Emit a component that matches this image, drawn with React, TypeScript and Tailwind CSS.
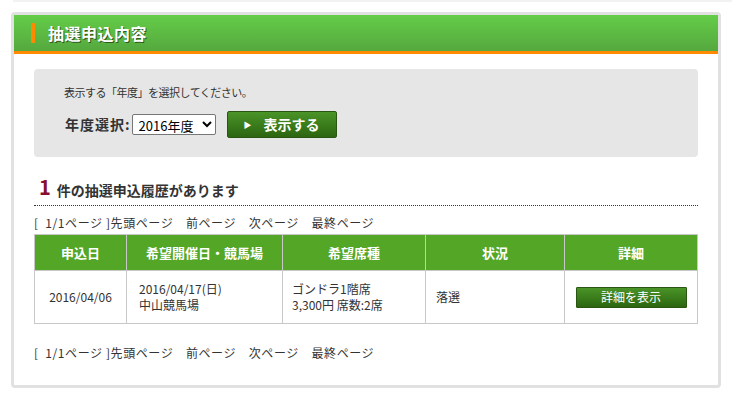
const FONT = { fontFamily: '"Noto Sans CJK JP", "Noto Sans", sans-serif' };

const COLS = [
  { label: '申込日', w: 'w-[92px]' },
  { label: '希望開催日・競馬場', w: 'w-[156px]' },
  { label: '希望席種', w: 'w-[143px]' },
  { label: '状況', w: 'w-[139px]' },
  { label: '詳細', w: '' },
];

function Pager() {
  return (
    <div className="text-[12px] leading-none tracking-[0.6px] text-[#333]">
      [&nbsp;&nbsp;1/1ページ&nbsp;]先頭ページ　前ページ　次ページ　最終ページ
    </div>
  );
}

export default function App() {
  return (
    <div className="h-[416px] w-[745px] bg-white" style={FONT}>
      <div className="mx-[13px] h-[2px] bg-[#f2f2f2]" />
      <div className="ml-[11px] mt-[10px] w-[710px] rounded-[4px] border-[3px] border-[#e1e1e1] bg-white">
        <div className="flex h-[36px] items-center bg-gradient-to-b from-[#64cd48] to-[#55a83e] pl-[17px]">
          <span className="h-[20px] w-[4px] rounded-[1px] bg-[#ff8a00]" />
          <span className="ml-[13px] text-[16px] font-bold tracking-[0.5px] text-white [text-shadow:1px_1px_0_#2d5a1e]">
            抽選申込内容
          </span>
        </div>
        <div className="h-[3px] bg-[#ff8a00]" />

        <div className="px-[20px] pb-[26px] pt-[15px]">
          <div className="h-[88px] rounded-[4px] bg-[#e6e6e6] pl-[30px] pt-[18px]">
            <p className="text-[11px] leading-none tracking-[-0.5px] text-[#333]">表示する「年度」を選択してください。</p>
            <div className="mt-[13px] flex items-center">
              <span className="pl-[1px] text-[14px] font-bold tracking-[1px] text-[#333]">年度選択:</span>
              <select
                defaultValue="2016"
                className="ml-[1px] h-[21px] w-[84px] rounded-[2px] border border-[#767676] bg-white pl-[2px] text-[13px] text-black"
                style={FONT}
              >
                <option value="2016">2016年度</option>
              </select>
              <button className="ml-[11px] flex h-[27px] w-[110px] items-center rounded-[2px] border border-[#2a5512] bg-gradient-to-b from-[#4a9428] to-[#2c6610] pl-[16px] text-white">
                <span className="text-[8px]">▶</span>
                <span className="ml-[12px] text-[14px] font-bold">表示する</span>
              </button>
            </div>
          </div>

          <div className="mt-[20px] flex items-end border-b border-dotted border-[#333] pb-[8px] pl-[5px]">
            <span className="text-[20px] leading-none font-bold text-[#8a0d2e]">1</span>
            <span className="ml-[6px] text-[14px] leading-none font-bold text-[#333]">件の抽選申込履歴があります</span>
          </div>

          <div className="mt-[11px]">
            <Pager />
          </div>

          <table className="mt-[5px] w-full border-collapse text-[12px] text-[#333]">
            <thead>
              <tr className="h-[36px] bg-[#53a626]">
                {COLS.map((c) => (
                  <th key={c.label} className={`${c.w} border border-[#c8c8c8] text-[13px] font-bold text-white`}>
                    {c.label}
                  </th>
                ))}
              </tr>
            </thead>
            <tbody>
              <tr className="h-[53px]">
                <td className="border border-[#c8c8c8] text-center">2016/04/06</td>
                <td className="border border-[#c8c8c8] pl-[12px] leading-[16px]">
                  2016/04/17(日)
                  <br />
                  中山競馬場
                </td>
                <td className="border border-[#c8c8c8] pl-[9px] leading-[16px]">
                  ゴンドラ1階席
                  <br />
                  3,300円 席数:2席
                </td>
                <td className="border border-[#c8c8c8] pl-[10px]">落選</td>
                <td className="border border-[#c8c8c8]">
                  <button className="mx-auto flex h-[21px] w-[111px] items-center justify-center rounded-[1px] border border-[#2a5512] bg-gradient-to-b from-[#4a9428] to-[#2c6610] text-[12px] text-white">
                    詳細を表示
                  </button>
                </td>
              </tr>
            </tbody>
          </table>

          <div className="mt-[23px]">
            <Pager />
          </div>
        </div>
      </div>
    </div>
  );
}
